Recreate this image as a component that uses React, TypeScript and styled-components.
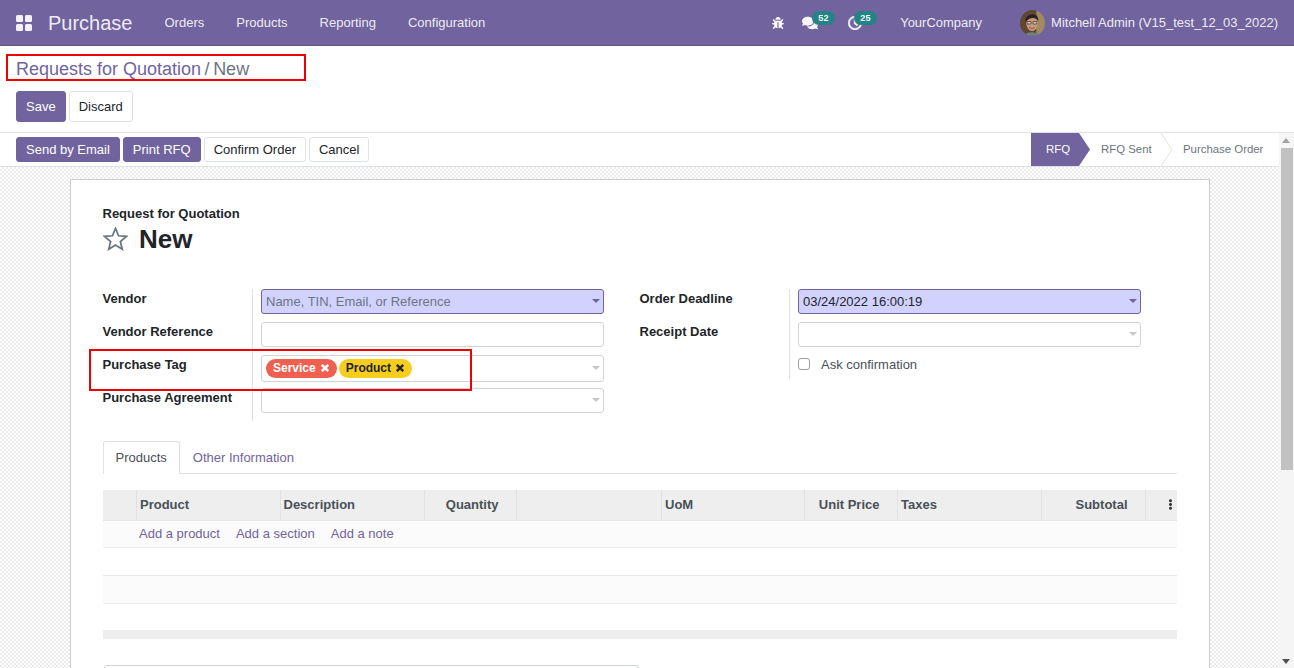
import styled, { createGlobalStyle } from 'styled-components';
import { FaBug, FaComments, FaRegClock, FaTimes, FaEllipsisV } from 'react-icons/fa';

const GlobalStyle = createGlobalStyle`
  html, body {
    margin: 0;
    height: 100%;
    overflow: hidden;
  }
  body {
    font-family: "Liberation Sans", Arial, sans-serif;
    font-size: 13px;
    line-height: 19.5px;
    color: #212529;
    background: #fff;
  }
  * {
    box-sizing: border-box;
  }
`;

const Page = styled.div`
  position: relative;
  display: flex;
  flex-direction: column;
  width: 1294px;
  height: 668px;
  overflow: hidden;
`;

const Navbar = styled.header`
  display: flex;
  align-items: center;
  height: 46px;
  padding: 0 16px;
  background: #71639e;
  border-bottom: 1px solid #5f5387;
  color: rgba(255, 255, 255, 0.9);
  flex: none;
`;

const AppsButton = styled.svg`
  width: 16px;
  height: 16px;
  margin-right: 16px;
  fill: #fff;
  opacity: 0.92;
`;

const Brand = styled.span`
  font-size: 20px;
  margin-top: 2px;
  margin-right: 32px;
`;

const NavMenu = styled.nav`
  display: flex;
  gap: 32px;
`;

const NavSystray = styled.div`
  display: flex;
  align-items: center;
  margin-left: auto;
  margin-right: -16px;
  padding-right: 16px;
`;

const TrayIcon = styled.span<{ $gap: number }>`
  position: relative;
  display: flex;
  align-items: center;
  height: 12px;
  margin-right: ${({ $gap }) => $gap}px;
  color: #fff;
  opacity: 0.95;
`;

const TrayBadge = styled.span<{ $left: number }>`
  position: absolute;
  left: ${({ $left }) => $left}px;
  top: -6px;
  padding: 0 6px;
  height: 14px;
  border-radius: 7px;
  background: #1f8585;
  color: #fff;
  font-size: 9.5px;
  font-weight: 700;
  line-height: 13px;
`;

const CompanyName = styled.span`
  margin-right: 38px;
`;

const UserMenu = styled.div`
  display: flex;
  align-items: center;
  gap: 6px;
`;

const Avatar = styled.svg`
  width: 25px;
  height: 26px;
  border-radius: 50%;
`;

const ControlPanel = styled.div`
  flex: none;
  height: 87px;
  padding: 10px 16px 0;
  background: #fff;
  border-bottom: 1px solid #dee2e6;
`;

const Breadcrumb = styled.div`
  display: flex;
  align-items: center;
  gap: 3.5px;
  height: 27px;
  font-size: 18px;
  color: #6c757d;
`;

const BreadcrumbLink = styled.a`
  color: #71639e;
`;

const SaveBar = styled.div`
  display: flex;
  gap: 3px;
  margin-top: 8px;
`;

const Button = styled.button<{ $primary?: boolean; $small?: boolean }>`
  height: ${({ $small }) => ($small ? 25 : 31)}px;
  padding: 0 9px;
  border: 1px solid ${({ $primary }) => ($primary ? '#71639e' : '#dee2e6')};
  border-radius: 3px;
  background: ${({ $primary }) => ($primary ? '#71639e' : '#fff')};
  color: ${({ $primary }) => ($primary ? '#fff' : '#212529')};
  font-family: inherit;
  font-size: 13px;
  line-height: 1;
`;

const Body = styled.div`
  flex: 1;
  min-height: 0;
  display: flex;
`;

const Main = styled.div`
  flex: 1;
  min-width: 0;
  display: flex;
  flex-direction: column;
`;

const StatusRow = styled.div`
  flex: none;
  display: flex;
  align-items: center;
  justify-content: space-between;
  height: 34px;
  padding-left: 16px;
  background: #fff;
  border-bottom: 1px solid #dee2e6;
`;

const ActionGroup = styled.div`
  display: flex;
  gap: 3px;
`;

const StatusBar = styled.div`
  display: flex;
  align-self: stretch;
`;

const StatusStep = styled.div<{ $active?: boolean; $width: number; $pad: number }>`
  position: relative;
  width: ${({ $width }) => $width}px;
  padding-left: ${({ $pad }) => $pad}px;
  display: flex;
  align-items: center;
  font-size: 11.4px;
  color: ${({ $active }) => ($active ? '#fff' : '#6c757d')};
  background: ${({ $active }) => ($active ? '#71639e' : 'transparent')};
`;

const StepArrow = styled.svg`
  position: absolute;
  left: 100%;
  top: 0;
  width: 11px;
  height: 33px;
  z-index: 1;
`;

const Background = styled.div`
  flex: 1;
  min-height: 0;
  overflow: hidden;
  padding: 12px 69px 0 70px;
  background-color: #fff;
  background-image: repeating-conic-gradient(#ececec 0 25%, #fff 0 50%);
  background-size: 4px 4px;
`;

const Sheet = styled.section`
  height: 600px;
  padding: 24px 32px 0;
  background: #fff;
  border: 1px solid #c9ccd2;
`;

const OverLabel = styled.div`
  margin-left: -0.5px;
  font-weight: 700;
`;

const TitleRow = styled.div`
  display: flex;
  align-items: center;
  height: 32px;
  margin-top: -1px;
  gap: 11px;
`;

const Star = styled.svg`
  width: 25px;
  height: 24px;
  fill: none;
  stroke: #6c757d;
  stroke-width: 1.9;
`;

const Title = styled.h1`
  margin: 0;
  font-size: 26px;
  font-weight: 700;
  line-height: 32px;
`;

const FormColumns = styled.div`
  display: grid;
  grid-template-columns: 501px 501px;
  column-gap: 36px;
  margin-top: 34px;
`;

const FieldGroup = styled.div`
  display: grid;
  grid-template-columns: 150px 343px;
  grid-auto-rows: 33px;
  column-gap: 8px;
`;

const FieldLabel = styled.label<{ $short?: boolean }>`
  height: ${({ $short }) => ($short ? '24px' : 'auto')};
  margin-left: -0.5px;
  font-weight: 700;
  border-right: 1px solid #dee2e6;
`;

const FieldCell = styled.div`
  position: relative;
`;

const FieldBox = styled.div<{ $required?: boolean; $tall?: boolean }>`
  position: relative;
  display: flex;
  align-items: center;
  height: ${({ $tall }) => ($tall ? 27 : 25)}px;
  padding: 1px 4px 0;
  border: 1px solid ${({ $required }) => ($required ? '#71639e' : '#ced4da')};
  border-radius: 3px;
  background: ${({ $required }) => ($required ? '#d2d2ff' : '#fff')};
  color: #212529;
`;

const Placeholder = styled.span`
  color: #6c757d;
`;

const Caret = styled.span<{ $dark?: boolean }>`
  position: absolute;
  right: 3px;
  top: 50%;
  margin-top: -2px;
  border-left: 4px solid transparent;
  border-right: 4px solid transparent;
  border-top: 4px solid ${({ $dark }) => ($dark ? '#71639e' : '#c4c7cb')};
`;

const Tag = styled.span<{ $bg: string; $fg: string }>`
  display: inline-flex;
  align-items: center;
  gap: 4px;
  height: 19px;
  margin-right: 2px;
  padding: 0 7px;
  border-radius: 10px;
  background: ${({ $bg }) => $bg};
  color: ${({ $fg }) => $fg};
  font-size: 12px;
  font-weight: 700;
  svg {
    width: 10px;
    height: 10px;
    margin-top: -1px;
    stroke: currentColor;
    stroke-width: 50;
  }
`;

const CheckRow = styled.div`
  display: flex;
  align-items: center;
  height: 19.5px;
  gap: 11px;
  color: #495057;
`;

const CheckBox = styled.span`
  width: 12px;
  height: 12px;
  border: 1px solid #9aa0a8;
  border-radius: 3px;
  background: #fff;
`;

const Tabs = styled.div`
  display: flex;
  height: 33px;
  margin-top: 20px;
  border-bottom: 1px solid #dee2e6;
`;

const Tab = styled.a<{ $active?: boolean }>`
  display: flex;
  align-items: center;
  height: 33px;
  padding: 1px 12px 0 ${({ $active }) => ($active ? 11.5 : 12)}px;
  border: 1px solid ${({ $active }) => ($active ? '#dee2e6' : 'transparent')};
  border-bottom-color: ${({ $active }) => ($active ? '#fff' : 'transparent')};
  border-radius: 3px 3px 0 0;
  background: ${({ $active }) => ($active ? '#fff' : 'transparent')};
  color: ${({ $active }) => ($active ? '#495057' : '#71639e')};
`;

const LinesTable = styled.div`
  margin-top: 16px;
`;

const HeaderRow = styled.div`
  display: grid;
  grid-template-columns: 34px 143.5px 144.5px 92px 145px 143px 93px 144px 104px 32px;
  height: 31px;
  background: #eeeeee;
  border-bottom: 1px solid #e6e6e6;
`;

const HeaderCell = styled.div<{ $right?: boolean; $last?: boolean }>`
  display: flex;
  align-items: center;
  justify-content: ${({ $right }) => ($right ? 'flex-end' : 'flex-start')};
  padding: 0 ${({ $right }) => ($right ? 17.5 : 3)}px 0 3px;
  border-right: ${({ $last }) => ($last ? 0 : '1px solid #dee2e6')};
  color: #495057;
  font-weight: 700;
  svg {
    margin: 0 -0.5px 0 auto;
    width: 11px;
    height: 11px;
    color: #343a40;
  }
`;

const TableRow = styled.div<{ $striped?: boolean; $height: number }>`
  display: flex;
  align-items: center;
  gap: 16px;
  height: ${({ $height }) => $height}px;
  padding-left: 36px;
  background: ${({ $striped }) => ($striped ? '#fbfbfb' : '#fff')};
  border-bottom: 1px solid #e9ecef;
`;

const AddLink = styled.a`
  color: #71639e;
`;

const TableFooter = styled.div`
  height: 9px;
  margin-top: 26px;
  background: #eeeeee;
`;

const NotesBox = styled.div`
  width: 535px;
  height: 30px;
  margin-top: 26px;
  margin-left: 1px;
  border: 1px solid #ced4da;
  border-radius: 3px;
`;

const Scrollbar = styled.div`
  flex: none;
  display: flex;
  flex-direction: column;
  align-items: center;
  width: 15px;
  padding-top: 15px;
  background: #f5f5f5;
  position: relative;
`;

const ScrollThumb = styled.div`
  width: 12px;
  height: 322px;
  background: #c1c1c1;
`;

const ScrollArrow = styled.span<{ $down?: boolean }>`
  position: absolute;
  left: 3px;
  ${({ $down }) => ($down ? 'bottom: 4px;' : 'top: 5px;')}
  border-left: 4.5px solid transparent;
  border-right: 4.5px solid transparent;
  ${({ $down }) =>
    $down ? 'border-top: 5px solid #505050;' : 'border-bottom: 5px solid #a3a3a3;'}
`;

const Annotation = styled.div<{ $x: number; $y: number; $w: number; $h: number }>`
  position: absolute;
  left: ${({ $x }) => $x}px;
  top: ${({ $y }) => $y}px;
  width: ${({ $w }) => $w}px;
  height: ${({ $h }) => $h}px;
  border: 2px solid #f00000;
  pointer-events: none;
`;

const columns = [
  { label: '' },
  { label: 'Product' },
  { label: 'Description' },
  { label: 'Quantity', right: true },
  { label: '' },
  { label: 'UoM' },
  { label: 'Unit Price', right: true },
  { label: 'Taxes' },
  { label: 'Subtotal', right: true },
];

export default function App() {
  return (
    <Page>
      <GlobalStyle />
      <Navbar>
        <AppsButton viewBox="0 0 16 16">
          <rect x="0" y="0" width="7" height="7" rx="1.5" />
          <rect x="9" y="0" width="7" height="7" rx="1.5" />
          <rect x="0" y="9" width="7" height="7" rx="1.5" />
          <rect x="9" y="9" width="7" height="7" rx="1.5" />
        </AppsButton>
        <Brand>Purchase</Brand>
        <NavMenu>
          <span>Orders</span>
          <span>Products</span>
          <span>Reporting</span>
          <span>Configuration</span>
        </NavMenu>
        <NavSystray>
          <TrayIcon $gap={18}>
            <FaBug size={12} />
          </TrayIcon>
          <TrayIcon $gap={30}>
            <FaComments size={16} />
            <TrayBadge $left={10}>52</TrayBadge>
          </TrayIcon>
          <TrayIcon $gap={38}>
            <FaRegClock size={14} stroke="currentColor" strokeWidth={24} />
            <TrayBadge $left={6}>25</TrayBadge>
          </TrayIcon>
          <CompanyName>YourCompany</CompanyName>
          <UserMenu>
            <Avatar viewBox="0 0 26 26" preserveAspectRatio="none">
              <defs>
                <filter id="soft">
                  <feGaussianBlur stdDeviation="0.5" />
                </filter>
              </defs>
              <g filter="url(#soft)">
                <rect width="26" height="26" fill="#5e4632" />
                <rect x="17" width="9" height="26" fill="#a08a62" />
                <ellipse cx="12.5" cy="13.5" rx="6" ry="7.5" fill="#c99a80" />
                <path d="M6 12 C4 3 20 1 19 11 C16 7 10 7 6 12Z" fill="#2a211d" />
                <path d="M7.5 11.5 H11.5 V14 H7.5Z M13.5 11.5 H17.5 V14 H13.5Z" fill="#dcc0ae" stroke="#3a3532" strokeWidth="0.7" />
                <path d="M9.5 17.5 Q12.5 19.5 15.5 17.5" fill="none" stroke="#8a4f3c" strokeWidth="0.9" />
                <path d="M4 26 C6 21 19 21 22 26Z" fill="#6f7f78" />
              </g>
            </Avatar>
            <span>Mitchell Admin (V15_test_12_03_2022)</span>
          </UserMenu>
        </NavSystray>
      </Navbar>

      <ControlPanel>
        <Breadcrumb>
          <BreadcrumbLink>Requests for Quotation</BreadcrumbLink>
          <span>/</span>
          <span>New</span>
        </Breadcrumb>
        <SaveBar>
          <Button $primary>Save</Button>
          <Button>Discard</Button>
        </SaveBar>
      </ControlPanel>

      <Body>
        <Main>
          <StatusRow>
            <ActionGroup>
              <Button $primary $small>Send by Email</Button>
              <Button $primary $small>Print RFQ</Button>
              <Button $small>Confirm Order</Button>
              <Button $small>Cancel</Button>
            </ActionGroup>
            <StatusBar>
              <StatusStep $active $width={48} $pad={15}>
                RFQ
                <StepArrow viewBox="0 0 11 33">
                  <path d="M0 0 L11 16.5 L0 33Z" fill="#71639e" />
                </StepArrow>
              </StatusStep>
              <StatusStep $width={82} $pad={22}>
                RFQ Sent
                <StepArrow viewBox="0 0 11 33">
                  <path d="M0 0 L11 16.5 L0 33" fill="#fff" stroke="#dee2e6" />
                </StepArrow>
              </StatusStep>
              <StatusStep $width={118} $pad={22}>Purchase Order</StatusStep>
            </StatusBar>
          </StatusRow>

          <Background>
            <Sheet>
              <OverLabel>Request for Quotation</OverLabel>
              <TitleRow>
                <Star viewBox="-1 -1 27 26">
                  <polygon points="12.5,0.5 15.8,8.5 24.4,9.1 17.8,14.7 19.8,23.1 12.5,18.6 5.2,23.1 7.2,14.7 0.6,9.1 9.2,8.5" />
                </Star>
                <Title>New</Title>
              </TitleRow>
              <FormColumns>
                <FieldGroup>
                  <FieldLabel>Vendor</FieldLabel>
                  <FieldCell>
                    <FieldBox $required>
                      <Placeholder>Name, TIN, Email, or Reference</Placeholder>
                      <Caret $dark />
                    </FieldBox>
                  </FieldCell>
                  <FieldLabel>Vendor Reference</FieldLabel>
                  <FieldCell>
                    <FieldBox />
                  </FieldCell>
                  <FieldLabel>Purchase Tag</FieldLabel>
                  <FieldCell>
                    <FieldBox $tall>
                      <Tag $bg="#f06050" $fg="#fff">
                        Service <FaTimes />
                      </Tag>
                      <Tag $bg="#f7cd1f" $fg="#212529">
                        Product <FaTimes />
                      </Tag>
                      <Caret />
                    </FieldBox>
                  </FieldCell>
                  <FieldLabel>Purchase Agreement</FieldLabel>
                  <FieldCell>
                    <FieldBox>
                      <Caret />
                    </FieldBox>
                  </FieldCell>
                </FieldGroup>
                <FieldGroup>
                  <FieldLabel>Order Deadline</FieldLabel>
                  <FieldCell>
                    <FieldBox $required>
                      03/24/2022 16:00:19
                      <Caret $dark />
                    </FieldBox>
                  </FieldCell>
                  <FieldLabel>Receipt Date</FieldLabel>
                  <FieldCell>
                    <FieldBox>
                      <Caret />
                    </FieldBox>
                  </FieldCell>
                  <FieldLabel $short />
                  <FieldCell>
                    <CheckRow>
                      <CheckBox />
                      Ask confirmation
                    </CheckRow>
                  </FieldCell>
                </FieldGroup>
              </FormColumns>

              <Tabs>
                <Tab $active>Products</Tab>
                <Tab>Other Information</Tab>
              </Tabs>

              <LinesTable>
                <HeaderRow>
                  {columns.map((col, i) => (
                    <HeaderCell key={i} $right={col.right}>
                      {col.label}
                    </HeaderCell>
                  ))}
                  <HeaderCell $last>
                    <FaEllipsisV />
                  </HeaderCell>
                </HeaderRow>
                <TableRow $striped $height={27}>
                  <AddLink>Add a product</AddLink>
                  <AddLink>Add a section</AddLink>
                  <AddLink>Add a note</AddLink>
                </TableRow>
                <TableRow $height={28} />
                <TableRow $striped $height={28} />
                <TableFooter />
              </LinesTable>
              <NotesBox />
            </Sheet>
          </Background>
        </Main>
        <Scrollbar>
          <ScrollArrow />
          <ScrollThumb />
          <ScrollArrow $down />
        </Scrollbar>
      </Body>

      <Annotation $x={6} $y={54} $w={300} $h={27} />
      <Annotation $x={89} $y={349} $w={383} $h={42} />
    </Page>
  );
}
